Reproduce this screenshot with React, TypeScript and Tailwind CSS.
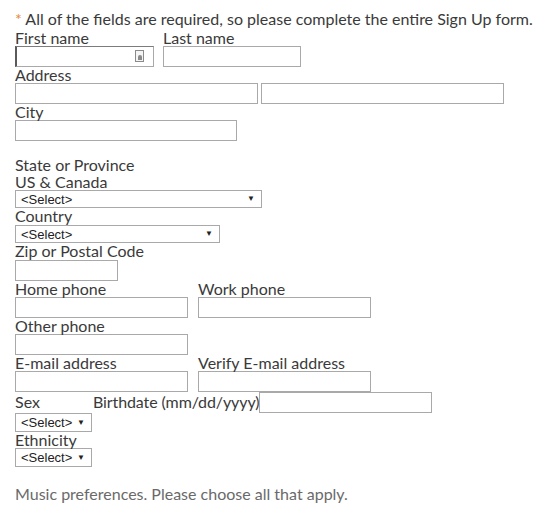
import React from "react";

const font = { fontFamily: "Lato, 'Noto Sans', sans-serif" };

function TextBox({ w, first }: { w: string; first?: boolean }) {
  if (first) {
    return (
      <div className={`relative h-[21px] ${w} border border-[#a9a9a9] border-t-[#7c7c7c] border-l-2 border-l-[#5a5a5a] bg-white`}>
        <span className="absolute right-[9px] top-[3px] flex h-[12px] w-[9px] items-end justify-center border border-[#8a8a8a] bg-[#f4f4f4]">
          <span className="mb-[1px] h-[5px] w-[4px] rounded-t-full bg-[#8a8a8a]" />
        </span>
      </div>
    );
  }
  return <div className={`h-[21px] ${w} border border-[#a9a9a9] bg-white`} />;
}

function Select({ w, h }: { w: string; h?: string }) {
  return (
    <div
      className={`flex ${h ?? "h-[18px]"} ${w} items-center justify-between border border-[#a9a9a9] bg-white pl-[5px] pr-[6px] text-[13px] leading-none text-[#222]`}
      style={{ fontFamily: "Arial, 'Liberation Sans', sans-serif" }}
    >
      <span>&lt;Select&gt;</span>
      <span className="text-[8px]">▼</span>
    </div>
  );
}

function Label({ children, h }: { children: React.ReactNode; h?: string }) {
  return (
    <div className={`${h ?? "h-[16px]"} text-[16px] leading-[16px] text-[#3a3a3a] whitespace-nowrap`}>
      {children}
    </div>
  );
}

export default function App() {
  return (
    <main className="min-h-[508px] w-[545px] bg-white pl-[15px] pt-[10px]" style={font}>
      <div className="h-[20px] text-[16px] leading-[17px] text-[#3a3a3a] whitespace-nowrap">
        <span className="text-[#e0893a]">*</span> All of the fields are required, so please complete the entire Sign Up form.
      </div>

      {/* names */}
      <div className="flex gap-[9px]">
        <div>
          <Label>First name</Label>
          <TextBox w="w-[139px]" first />
        </div>
        <div>
          <Label>Last name</Label>
          <TextBox w="w-[138px]" />
        </div>
      </div>

      <Label>Address</Label>
      <div className="flex gap-[3px]">
        <TextBox w="w-[243px]" />
        <TextBox w="w-[243px]" />
      </div>

      <Label>City</Label>
      <TextBox w="w-[222px]" />

      <div className="h-[16px]" />
      <Label h="h-[17px]">State or Province</Label>
      <Label>US &amp; Canada</Label>
      <Select w="w-[247px]" />

      <Label h="h-[17px]">Country</Label>
      <Select w="w-[205px]" />

      <Label h="h-[17px]">Zip or Postal Code</Label>
      <TextBox w="w-[103px]" />

      <div className="flex gap-[10px]">
        <div>
          <Label>Home phone</Label>
          <TextBox w="w-[173px]" />
        </div>
        <div>
          <Label>Work phone</Label>
          <TextBox w="w-[173px]" />
        </div>
      </div>

      <Label>Other phone</Label>
      <TextBox w="w-[173px]" />

      <div className="flex gap-[10px]">
        <div>
          <Label>E-mail address</Label>
          <TextBox w="w-[173px]" />
        </div>
        <div>
          <Label>Verify E-mail address</Label>
          <TextBox w="w-[173px]" />
        </div>
      </div>

      <div className="flex items-start">
        <div className="w-[78px] pt-[2px]">
          <Label>Sex</Label>
        </div>
        <div className="pt-[2px] tracking-[-0.1px]">
          <Label>Birthdate (mm/dd/yyyy)</Label>
        </div>
        <TextBox w="w-[173px]" />
      </div>
      <Select w="w-[77px]" h="h-[19px]" />

      <Label>Ethnicity</Label>
      <Select w="w-[77px]" h="h-[19px]" />

      <div className="mt-[18px] text-[16px] leading-[17px] text-[#6a6a6a]">
        Music preferences. Please choose all that apply.
      </div>
    </main>
  );
}
